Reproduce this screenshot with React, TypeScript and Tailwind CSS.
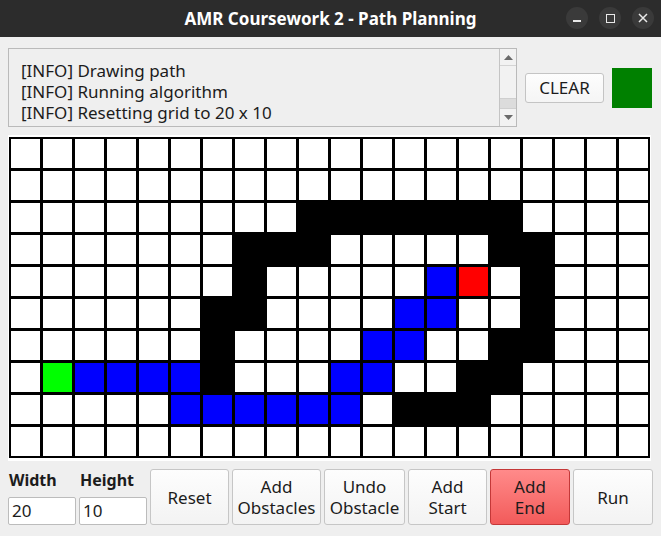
import React from 'react';

const GRID = [
  '....................',
  '....................',
  '.........#######....',
  '.......###.....##...',
  '.......#.....BR.#...',
  '......##....BB..#...',
  '......#....BB..##...',
  '.GBBBB#...BB..##....',
  '.....BBBBBB.###.....',
  '....................',
];

const cellColor: Record<string, string> = {
  '.': 'bg-white',
  '#': 'bg-black',
  B: 'bg-[#0000ff]',
  R: 'bg-[#ff0000]',
  G: 'bg-[#00ff00]',
};

const font = { fontFamily: '"Noto Sans", "Open Sans", sans-serif' };

const TitleBar: React.FC = () => (
  <div className="h-[37px] bg-[#2c2c2c] flex items-center relative">
    <div className="flex-1 text-center text-[17px] font-bold text-white">AMR Coursework 2 - Path Planning</div>
    <div className="absolute right-[7px] top-[7px] flex gap-[11px]">
      <div className="w-[22px] h-[22px] rounded-full bg-[#3a3a3a] flex items-center justify-center">
        <div className="w-[8px] h-[1.5px] bg-[#e8e8e8] mt-[6px]" />
      </div>
      <div className="w-[22px] h-[22px] rounded-full bg-[#3a3a3a] flex items-center justify-center">
        <div className="w-[9px] h-[9px] border-[1.5px] border-[#e8e8e8]" />
      </div>
      <div className="w-[22px] h-[22px] rounded-full bg-[#3a3a3a] flex items-center justify-center">
        <svg width="10" height="10" viewBox="0 0 10 10">
          <path d="M1 1 L9 9 M9 1 L1 9" stroke="#e8e8e8" strokeWidth="1.5" />
        </svg>
      </div>
    </div>
  </div>
);

const LogBox: React.FC = () => {
  const lines = ['[INFO] Drawing path', '[INFO] Running algorithm', '[INFO] Resetting grid to 20 x 10', '[INFO] Loading obstacles'];
  return (
    <div className="w-[509px] h-[79px] border border-[#bababa] bg-[#efefef] flex">
      <div className="flex-1 overflow-hidden pl-[12px] pt-[11px] text-[17px] leading-[21px] text-[#1c1c1c]">
        {lines.map((l, i) => (
          <div key={i} className="whitespace-nowrap">{l}</div>
        ))}
      </div>
      <div className="w-[17px] border-l border-[#c4c4c4] bg-[#f2f2f2] flex flex-col">
        <div className="h-[17px] border-b border-[#d4d4d4] flex items-center justify-center">
          <svg width="9" height="5" viewBox="0 0 9 5"><path d="M0 5 L4.5 0 L9 5 Z" fill="#6a6a6a" /></svg>
        </div>
        <div className="flex-1 flex flex-col justify-end">
          <div className="h-[11px] bg-[#dcdcdc] border-y border-[#cfcfcf]" />
        </div>
        <div className="h-[17px] flex items-center justify-center">
          <svg width="9" height="5" viewBox="0 0 9 5"><path d="M0 0 L9 0 L4.5 5 Z" fill="#6a6a6a" /></svg>
        </div>
      </div>
    </div>
  );
};

const Btn: React.FC<{ w: string; red?: boolean; children: React.ReactNode }> = ({ w, red, children }) => (
  <div
    className={`${w} h-[56px] rounded-[3px] border flex items-center justify-center text-center text-[17px] leading-[21px] ${
      red
        ? 'border-[#c43838] bg-gradient-to-b from-[#ff8a8a] to-[#f25a5a] text-[#1c1c1c]'
        : 'border-[#c6c6c6] bg-gradient-to-b from-[#fdfdfd] to-[#f3f3f3] text-[#1c1c1c]'
    }`}
  >
    {children}
  </div>
);

export default function App() {
  return (
    <div className="w-[661px] h-[536px] bg-[#efefef] flex flex-col overflow-hidden" style={font}>
      <TitleBar />
      <div className="flex items-center mt-[11px] ml-[8px]">
        <LogBox />
        <div className="ml-[8px] w-[79px] h-[30px] rounded-[3px] border border-[#c4c4c4] bg-gradient-to-b from-[#fdfdfd] to-[#f5f5f5] flex items-center justify-center text-[17px] text-[#1c1c1c]">
          CLEAR
        </div>
        <div className="ml-[8px] w-[40px] h-[40px] bg-[#008000]" />
      </div>
      <div className="mt-[8px] ml-[8px] w-[643px] h-[326px] bg-white pt-[2px] pl-[1px]">
        <div className="w-[641px] bg-black p-[2px] grid grid-cols-[repeat(20,29px)] gap-[3px]">
          {GRID.flatMap((row, r) =>
            row.split('').map((c, i) => <div key={`${r}-${i}`} className={`h-[29px] ${cellColor[c]}`} />)
          )}
        </div>
      </div>
      <div className="flex mt-[8px] ml-[8px] gap-[3px]">
        <div className="w-[68px] flex flex-col">
          <div className="h-[28px] font-bold text-[16px] leading-[22px] pl-[1px] text-[#1c1c1c]">Width</div>
          <div className="h-[28px] bg-white border border-[#bcbcbc] rounded-[2px] pl-[3px] text-[17px] leading-[26px] text-[#1c1c1c]">20</div>
        </div>
        <div className="w-[68px] flex flex-col">
          <div className="h-[28px] font-bold text-[16px] leading-[22px] pl-[1px] text-[#1c1c1c]">Height</div>
          <div className="h-[28px] bg-white border border-[#bcbcbc] rounded-[2px] pl-[3px] text-[17px] leading-[26px] text-[#1c1c1c]">10</div>
        </div>
        <Btn w="w-[79px]">Reset</Btn>
        <Btn w="w-[89px]">Add<br />Obstacles</Btn>
        <Btn w="w-[81px]">Undo<br />Obstacle</Btn>
        <Btn w="w-[79px]">Add<br />Start</Btn>
        <Btn w="w-[80px]" red>Add<br />End</Btn>
        <Btn w="w-[80px]">Run</Btn>
      </div>
    </div>
  );
}
